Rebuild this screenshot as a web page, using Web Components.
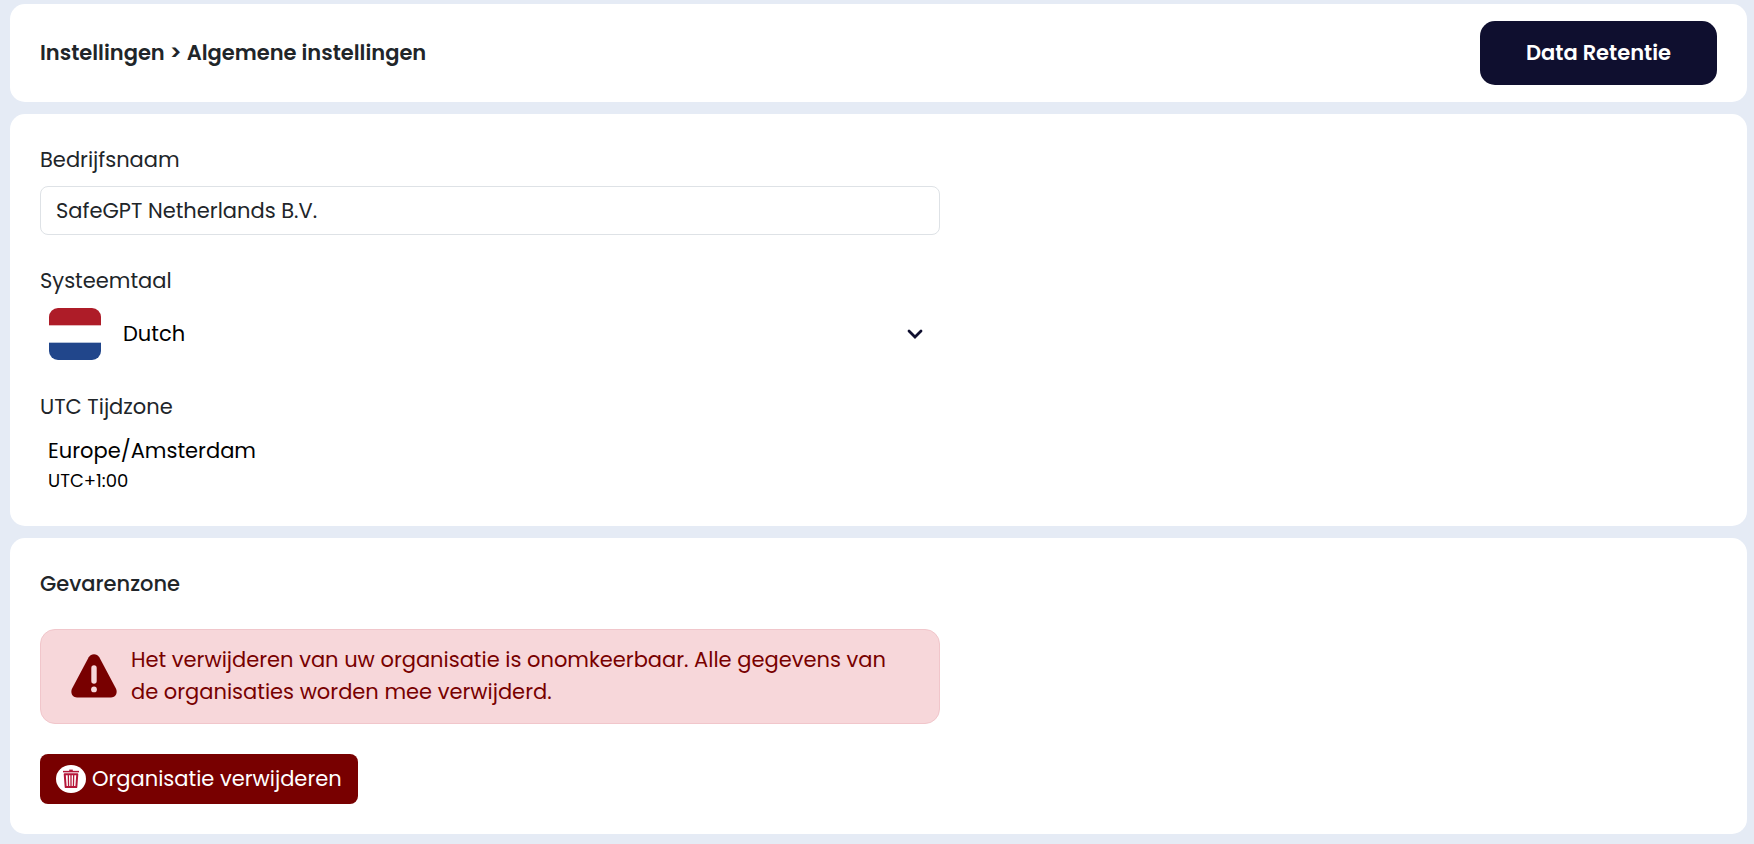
<!DOCTYPE html>
<html lang="nl">
<head>
<meta charset="UTF-8">
<meta name="viewport" content="width=device-width, initial-scale=1.0">
<title>Algemene instellingen</title>
<style>
    :root {
        --color-page: #e5ebf5;
        --color-text: #212529;
        --color-navy: #0f0f2f;
        --color-danger: #780000;
        --field-width: 900px;
    }

    body {
        margin: 0;
        background: var(--color-page);
        color: var(--color-text);
        font-family: Poppins, Inter, sans-serif;
        font-size: 21px;
        line-height: 32px;
    }
</style>
</head>
<body>
<settings-page>
    <settings-header slot="header" heading="Instellingen &gt; Algemene instellingen">Data Retentie</settings-header>
    <settings-card>
        <text-field label="Bedrijfsnaam" value="SafeGPT Netherlands B.V."></text-field>
        <language-field label="Systeemtaal"></language-field>
        <timezone-field label="UTC Tijdzone" zone="Europe/Amsterdam" offset="UTC+1:00"></timezone-field>
    </settings-card>
    <settings-card heading="Gevarenzone">
        <danger-alert>Het verwijderen van uw organisatie is onomkeerbaar. Alle gegevens van de organisaties worden mee verwijderd.</danger-alert>
        <delete-button>Organisatie verwijderen</delete-button>
    </settings-card>
</settings-page>

<script>
class SettingsPage extends HTMLElement {
    constructor() {
        super();
        this.attachShadow({ mode: 'open' });
    }

    connectedCallback() {
        this.shadowRoot.innerHTML = `
            <style>
                :host {
                    display: flex;
                    flex-direction: column;
                    gap: 12px;
                    padding: 4px 7px 10px 10px;
                }

                main {
                    display: flex;
                    flex-direction: column;
                    gap: 12px;
                }
            </style>
            <slot name="header"></slot>
            <main><slot></slot></main>
        `;
    }
}

class SettingsHeader extends HTMLElement {
    constructor() {
        super();
        this.attachShadow({ mode: 'open' });
    }

    connectedCallback() {
        this.shadowRoot.innerHTML = `
            <style>
                :host {
                    display: block;
                }

                header {
                    display: flex;
                    align-items: center;
                    justify-content: space-between;
                    gap: 20px;
                    padding: 17px 30px;
                    background: #fff;
                    border-radius: 15px;
                }

                h1 {
                    margin: 0;
                    font-size: inherit;
                    font-weight: 600;
                }

                button {
                    padding: 16px 46px;
                    border: 0;
                    border-radius: 15px;
                    background: var(--color-navy);
                    color: #fff;
                    font: inherit;
                    font-weight: 600;
                    cursor: pointer;
                }
            </style>
            <header>
                <h1></h1>
                <button type="button"><slot></slot></button>
            </header>
        `;
        this.shadowRoot.querySelector('h1').textContent = this.getAttribute('heading');
    }
}

class SettingsCard extends HTMLElement {
    constructor() {
        super();
        this.attachShadow({ mode: 'open' });
    }

    connectedCallback() {
        const heading = this.getAttribute('heading');
        this.shadowRoot.innerHTML = `
            <style>
                :host {
                    display: block;
                }

                section {
                    display: flex;
                    flex-direction: column;
                    align-items: flex-start;
                    gap: 30px;
                    padding: 30px;
                    background: #fff;
                    border-radius: 15px;
                }

                h2 {
                    margin: 0;
                    font-size: inherit;
                    font-weight: 500;
                    line-height: 31px;
                }
            </style>
            <section>
                ${heading ? `<h2>${heading}</h2>` : ''}
                <slot></slot>
            </section>
        `;
    }
}

const fieldStyles = `
    :host {
        display: block;
        width: 100%;
        max-width: var(--field-width);
    }

    label {
        display: block;
        margin-bottom: 10px;
    }
`;

class TextField extends HTMLElement {
    constructor() {
        super();
        this.attachShadow({ mode: 'open' });
    }

    connectedCallback() {
        this.shadowRoot.innerHTML = `
            <style>
                ${fieldStyles}

                input {
                    display: block;
                    box-sizing: border-box;
                    width: 100%;
                    height: 49px;
                    padding: 0 15px 1px;
                    border: 1px solid #dee2e6;
                    border-radius: 8px;
                    background: #fff;
                    color: inherit;
                    font: inherit;
                }
            </style>
            <label for="field">${this.getAttribute('label')}</label>
            <input id="field" type="text" value="${this.getAttribute('value')}">
        `;
    }
}

class LanguageField extends HTMLElement {
    constructor() {
        super();
        this.attachShadow({ mode: 'open' });
    }

    connectedCallback() {
        this.shadowRoot.innerHTML = `
            <style>
                ${fieldStyles}

                .control {
                    display: grid;
                    grid-template-columns: 52px 1fr 16px;
                    align-items: center;
                    gap: 22px;
                    height: 54px;
                    padding: 0 17px 0 9px;
                }

                .flag {
                    display: block;
                    width: 52px;
                    height: 52px;
                }

                /* the select runs under the chevron so that it opens the list too */
                select {
                    grid-area: 1 / 2 / 2 / 4;
                    appearance: none;
                    height: 100%;
                    padding: 0;
                    border: 0;
                    background: none;
                    color: #000;
                    font: inherit;
                }

                .chevron {
                    grid-area: 1 / 3;
                    width: 16px;
                    height: 10px;
                    pointer-events: none;
                }
            </style>
            <label for="language">${this.getAttribute('label')}</label>
            <div class="control">
                <svg class="flag" viewBox="0 0 52 52" aria-hidden="true">
                    <clipPath id="round"><rect width="52" height="52" rx="9"/></clipPath>
                    <g clip-path="url(#round)">
                        <rect width="52" height="52" fill="#fff"/>
                        <rect width="52" height="17.33" fill="#ae1c28"/>
                        <rect y="34.67" width="52" height="17.33" fill="#21468b"/>
                    </g>
                </svg>
                <select id="language">
                    <option selected>Dutch</option>
                </select>
                <svg class="chevron" viewBox="0 0 16 10" aria-hidden="true">
                    <path d="M2 2l6 6 6-6" fill="none" stroke="#0f0f2f" stroke-width="2.8" stroke-linecap="round"/>
                </svg>
            </div>
        `;
    }
}

class TimezoneField extends HTMLElement {
    constructor() {
        super();
        this.attachShadow({ mode: 'open' });
    }

    connectedCallback() {
        this.shadowRoot.innerHTML = `
            <style>
                ${fieldStyles}

                output {
                    display: flex;
                    flex-direction: column;
                    padding: 2px 8px;
                    color: #000;
                }

                .offset {
                    font-size: 18px;
                    line-height: 27px;
                }
            </style>
            <label for="zone">${this.getAttribute('label')}</label>
            <output id="zone">
                <span>${this.getAttribute('zone')}</span>
                <span class="offset">${this.getAttribute('offset')}</span>
            </output>
        `;
    }
}

class DangerAlert extends HTMLElement {
    constructor() {
        super();
        this.attachShadow({ mode: 'open' });
    }

    connectedCallback() {
        this.shadowRoot.innerHTML = `
            <style>
                :host {
                    display: block;
                    width: 100%;
                    max-width: var(--field-width);
                }

                .alert {
                    display: flex;
                    align-items: center;
                    gap: 14px;
                    padding: 14px 30px 15px;
                    border: 1px solid #f1c6cb;
                    border-radius: 15px;
                    background: #f7d7da;
                    color: var(--color-danger);
                }

                svg {
                    flex: none;
                    width: 46px;
                    height: 44px;
                }

                p {
                    margin: 0;
                }
            </style>
            <div class="alert" role="alert">
                <svg viewBox="0 0 46 44" aria-hidden="true">
                    <path d="M17.7 3.2C20 -.8 26 -.8 28.3 3.2L44.9 34.6C47 38.6 44.6 43.4 40 43.4H6C1.4 43.4 -1 38.6 1.1 34.6Z" fill="#780000"/>
                    <path d="M23 14v13" stroke="#f7d7da" stroke-width="5.4" stroke-linecap="round"/>
                    <circle cx="23" cy="35.4" r="2.9" fill="#f7d7da"/>
                </svg>
                <p><slot></slot></p>
            </div>
        `;
    }
}

class DeleteButton extends HTMLElement {
    constructor() {
        super();
        this.attachShadow({ mode: 'open' });
    }

    connectedCallback() {
        this.shadowRoot.innerHTML = `
            <style>
                :host {
                    display: block;
                }

                button {
                    display: flex;
                    align-items: center;
                    gap: 6px;
                    padding: 9px 16px;
                    border: 0;
                    border-radius: 8px;
                    background: var(--color-danger);
                    color: #fff;
                    font: inherit;
                    cursor: pointer;
                }

                svg {
                    width: 30px;
                    height: 28px;
                }
            </style>
            <button type="button">
                <svg viewBox="0 0 30 28" aria-hidden="true">
                    <ellipse cx="15" cy="14" rx="15" ry="14" fill="#fff"/>
                    <g fill="none" stroke="#b5173a">
                        <path d="M7 6.6h16" stroke-width="1.5"/>
                        <path d="M13.2 5.4h3.6" stroke-width="1.6"/>
                        <path d="M8.7 9.2h12.6l-1 12.9H9.7z" stroke-width="2" stroke-linejoin="round"/>
                        <path d="M12.3 9.5l.3 12.5M15 9.5v12.5M17.7 9.5l-.3 12.5" stroke-width="1.3"/>
                    </g>
                </svg>
                <span><slot></slot></span>
            </button>
        `;
    }
}

customElements.define('settings-page', SettingsPage);
customElements.define('settings-header', SettingsHeader);
customElements.define('settings-card', SettingsCard);
customElements.define('text-field', TextField);
customElements.define('language-field', LanguageField);
customElements.define('timezone-field', TimezoneField);
customElements.define('danger-alert', DangerAlert);
customElements.define('delete-button', DeleteButton);
</script>
</body>
</html>
